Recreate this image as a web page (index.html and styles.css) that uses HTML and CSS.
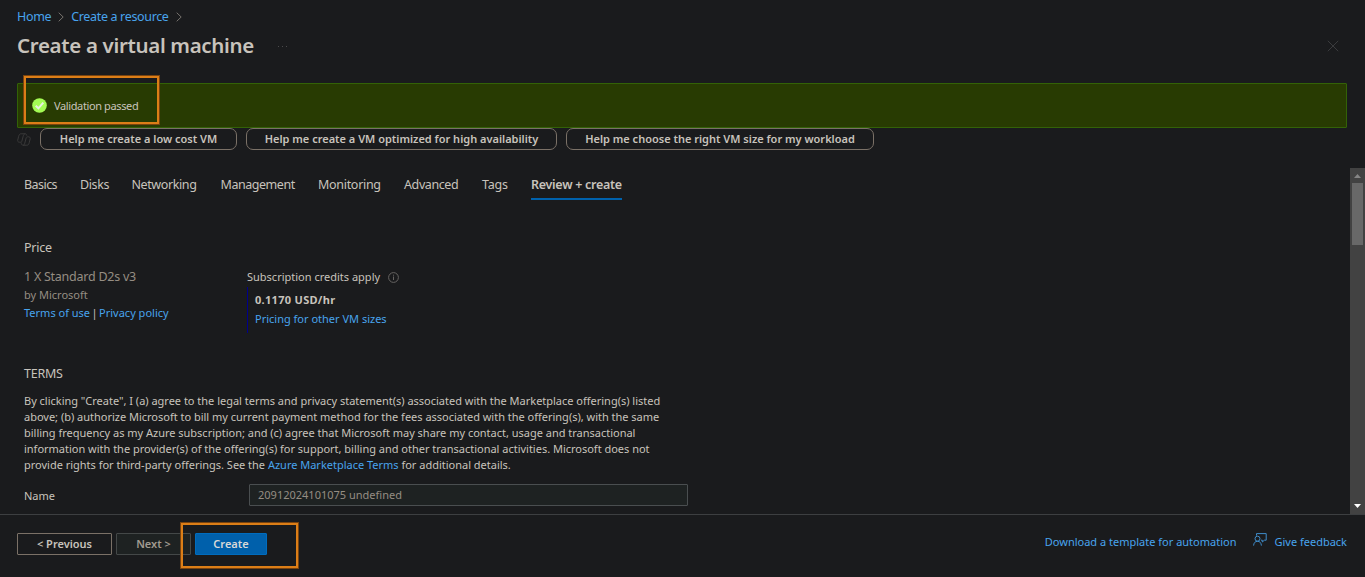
FILE: index.html
```html
<!DOCTYPE html>
<html lang="en">
<head>
<meta charset="utf-8">
<title>Create a virtual machine</title>
<link rel="stylesheet" href="styles.css">
</head>
<body>
<div class="page">
  <header class="header">
    <nav class="crumbs">
      <a>Home</a>
      <svg width="6" height="10" viewBox="0 0 6 10"><path d="M.7.7 5.2 5 .7 9.3"/></svg>
      <a>Create a resource</a>
      <svg width="6" height="10" viewBox="0 0 6 10"><path d="M.7.7 5.2 5 .7 9.3"/></svg>
    </nav>
    <div class="title-row">
      <h1>Create a virtual machine</h1>
      <span class="more"><i></i><i></i><i></i></span>
      <svg class="close" width="12" height="12" viewBox="0 0 12 12"><path d="M.8.8 11.2 11.2M11.2.8.8 11.2"/></svg>
    </div>
  </header>
  <div class="banner">
    <svg class="check" width="15" height="15" viewBox="0 0 15 15"><circle cx="7.5" cy="7.5" r="7.3" fill="#a4fb54"/><path d="M3.7 7.7 6.4 10.3 11.3 4.7" fill="none" stroke="#e9efe2" stroke-width="2"/></svg>
    <span class="banner-text">Validation passed</span>
    <div class="mark mark-banner"></div>
  </div>
  <div class="prompts">
    <svg class="copilot" width="14" height="13" viewBox="0 0 14 13"><path d="M5 .8h3.200c1 0 1.300.7 1.600 1.800M8.300.8C7 .8 6.500 2 6.200 3.200L4.800 8.400C4.500 9.200 4 9.300 3 9.200H2.300C1.100 9.200.4 8.300.7 7.200l1-4C2.100 1.600 2.800.8 4.200.8H5M4.100 9.500c.3 1.500.6 2.700 1.900 2.700 1.200 0 1.500-1 1.800-2.200l1.400-5.200c.3-.8.8-1 2-1 1.500 0 2.300.9 2 2l-1 4c-.4 1.600-1 2.400-2.400 2.400H6"/></svg>
    <button class="pill p1"><span>Help me create a low cost VM</span></button>
    <button class="pill p2"><span>Help me create a VM optimized for high availability</span></button>
    <button class="pill p3"><span>Help me choose the right VM size for my workload</span></button>
  </div>
  <div class="body">
    <main class="content">
      <nav class="tabs">
        <span class="t1">Basics</span><span class="t2">Disks</span><span class="t3">Networking</span><span class="t4">Management</span><span class="t5">Monitoring</span><span class="t6">Advanced</span><span class="t7">Tags</span><span class="t8 active">Review + create</span>
      </nav>
      <h2 class="section price">Price</h2>
      <div class="price-row">
        <div class="product">
          <div class="sku">1 X Standard D2s v3</div>
          <div class="by">by Microsoft</div>
          <div class="legal"><a>Terms of use</a><span class="bar">|</span><a>Privacy policy</a></div>
        </div>
        <div class="cost">
          <div class="credits"><span>Subscription credits apply</span>
            <svg width="11" height="11" viewBox="0 0 11 11"><circle cx="5.5" cy="5.5" r="4.900" fill="none" stroke="#666462"/><path d="M5.500 4.500v3.500M5.500 2.700v1" stroke="#666462"/></svg>
          </div>
          <div class="amount">
            <strong>0.1170 USD/hr</strong>
            <a>Pricing for other VM sizes</a>
          </div>
        </div>
      </div>
      <h2 class="section terms">TERMS</h2>
      <p class="agreement">
        <span>By clicking "Create", I (a) agree to the legal terms and privacy statement(s) associated with the Marketplace offering(s) listed</span>
        <span>above; (b) authorize Microsoft to bill my current payment method for the fees associated with the offering(s), with the same</span>
        <span>billing frequency as my Azure subscription; and (c) agree that Microsoft may share my contact, usage and transactional</span>
        <span>information with the provider(s) of the offering(s) for support, billing and other transactional activities. Microsoft does not</span>
        <span>provide rights for third-party offerings. See the <a>Azure Marketplace Terms</a> for additional details.</span>
      </p>
      <div class="field">
        <label>Name</label>
        <div class="input">20912024101075 undefined</div>
      </div>
    </main>
    <div class="scrollbar">
      <svg class="up" width="15" height="15" viewBox="0 0 15 15"><path d="M4 10h7L7.500 6z" fill="#858585"/></svg>
      <div class="thumb"></div>
      <svg class="down" width="15" height="15" viewBox="0 0 15 15"><path d="M4 5h7L7.500 9z" fill="#fff"/></svg>
    </div>
  </div>
  <footer class="footer">
    <button class="btn previous">&lt; Previous</button>
    <button class="btn next">Next &gt;</button>
    <div class="create-wrap">
      <button class="btn create">Create</button>
      <div class="mark mark-create"></div>
    </div>
    <a class="download">Download a template for automation</a>
    <svg class="feedback-icon" width="14" height="13" viewBox="0 0 14 13"><path d="M3.500 2.600V.6h9.700v6.600h-1.800L9.300 9V7.200H8M.6 12.600c.2-2.800 1.600-4.300 3.900-4.300s3.700 1.500 3.900 4.300"/><circle cx="4.500" cy="5.700" r="2.500"/></svg>
    <a class="feedback">Give feedback</a>
  </footer>
</div>
</body>
</html>
```
FILE: styles.css
```css
* { box-sizing: border-box; }
body { margin: 0; background: #1b1a1c; }
.page {
  width: 1365px; height: 577px; overflow: hidden;
  display: flex; flex-direction: column;
  background: #1a1b1d; color: #c8c3bc;
  font: 11px/16px "Noto Sans", sans-serif;
  white-space: nowrap;
}
a { color: #48a4ed; }
button { font: inherit; color: inherit; white-space: nowrap; }
h1, h2, p { margin: 0; }

.header { height: 83px; padding: 8px 0 0 17px; }
.crumbs { display: flex; align-items: center; height: 17px; font-size: 12.5px; letter-spacing: -.34px; }
.crumbs svg { margin: 0 7px; fill: none; stroke: #77736e; }
.title-row { display: flex; align-items: center; height: 30px; margin-top: 6px; }
h1 { width: 237px; font-size: 20.5px; line-height: 28px; font-weight: 600; letter-spacing: -.33px; padding-bottom: 2px; }
.more { display: flex; gap: 3px; margin-left: 24px; }
.more i { width: 1px; height: 1px; background: #4b4b4c; }
.close { margin: 0 26px 0 auto; fill: none; stroke: #3b3c3e; }

.banner {
  position: relative; display: flex; align-items: center;
  height: 45px; margin: 0 18px 0 17px; padding: 0 0 0 13.5px;
  background: #283b02; border: 1px solid #336207; border-radius: 1px;
}
.banner-text { margin-left: 7.5px; font-size: 11px; letter-spacing: -.38px; }
.mark { position: absolute; border: 3px solid #dc7e17; outline: 1px solid #79430f; outline-offset: -1px; }
.mark-banner { left: 5px; top: -9px; width: 137px; height: 50px; }

.prompts { display: flex; align-items: flex-start; height: 40px; padding-left: 17px; }
.copilot { margin: 5px 9px 0 0; fill: none; stroke: #3a3a3a; }
.pill {
  height: 22px; margin: 0 9px 0 0; padding: 0; background: transparent;
  border: 1px solid #7b7167; border-radius: 7px; font-weight: 600; line-height: 20px;
}
.p1 { width: 197px; } .p2 { width: 311px; } .p3 { width: 308px; }

.body { display: flex; height: 346px; }
.content { width: 1350px; padding-left: 24px; }
.tabs { display: flex; height: 32px; gap: 23px; font-size: 12.5px; letter-spacing: -.4px; }
.tabs span { height: 32px; line-height: 33px; }
.t1 { width: 33px; letter-spacing: -.55px; }
.t2 { width: 28.5px; }
.t3 { width: 66px; }
.t4 { width: 74.5px; letter-spacing: -.46px; }
.t5 { width: 63px; letter-spacing: -.3px; }
.t6 { width: 55px; }
.t7 { width: 26px; letter-spacing: -.2px; }
.t8 { width: 91px; letter-spacing: -.28px; }
.tabs .active { font-weight: 600; border-bottom: 2px solid #0062ad; }
.section { font-size: 12.5px; font-weight: 400; line-height: 18px; letter-spacing: -.25px; }
.price { margin-top: 39px; }
.price-row { display: flex; height: 70px; margin-top: 10px; }
.product { width: 223px; color: #958d83; }
.sku { font-size: 12.5px; line-height: 19px; letter-spacing: -.25px; }
.by { line-height: 18px; }
.legal { line-height: 18px; color: #c8c3bc; }
.bar { display: inline-block; width: 9px; text-align: center; }
.credits { display: flex; align-items: center; height: 20px; gap: 8px; }
.amount { display: flex; flex-direction: column; height: 46px; padding: 3px 0 0 7px; border-left: 1px solid #00008b; line-height: 19px; }
.amount strong { letter-spacing: .3px; }
.terms { margin-top: 28px; }
.agreement { display: flex; flex-direction: column; margin-top: 10px; line-height: 16px; letter-spacing: -.01px; }
.agreement span { align-self: flex-start; }
.field { display: flex; height: 22px; margin-top: 11px; line-height: 24px; }
.field label { width: 225px; }
.input { width: 439px; padding-left: 8px; line-height: 20px; background: #1e2222; border: 1px solid #4a4e50; border-radius: 1px; color: #958d83; }

.scrollbar { display: flex; flex-direction: column; align-items: center; width: 15px; background: #424242; }
.thumb { width: 11px; height: 62px; background: #686868; }
.down { margin-top: auto; }

.footer { display: flex; align-items: flex-start; height: 63px; padding: 18px 18px 0 17px; border-top: 1px solid #3d3f41; }
.btn { height: 22px; padding: 0; border: 1px solid #7b7167; border-radius: 1px; background: transparent; font-weight: 600; line-height: 20px; }
.previous { width: 95px; }
.next { width: 75px; margin-left: 4px; background: #1e2222; border-color: #444848; color: #a29a90; }
.create-wrap { position: relative; margin-left: 4px; }
.create { width: 72px; background: #0060ab; border-color: #006cbe; color: #d8d8d8; }
.mark-create { left: -15px; top: -11px; width: 119px; height: 47px; }
.download { margin-left: auto; }
.download, .feedback { line-height: 18px; }
.feedback-icon { margin: 0 7px 0 17px; fill: none; stroke: #3f8dcb; }
```
